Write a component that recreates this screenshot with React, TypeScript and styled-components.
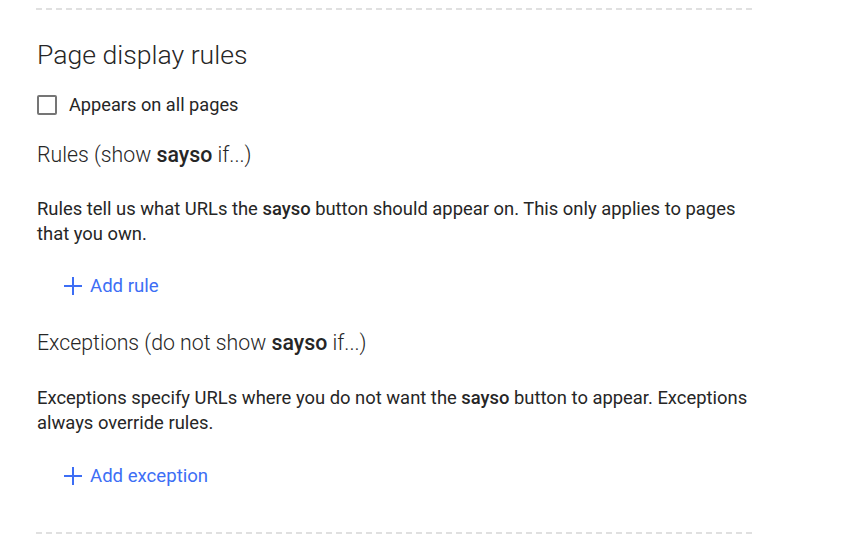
import { createGlobalStyle, styled } from "styled-components"

const GlobalStyle = createGlobalStyle`
  html, body {
    margin: 0;
    padding: 0;
    background: #fff;
  }
  body {
    font-family: Roboto, "Liberation Sans", sans-serif;
    color: #262626;
  }
`

const Page = styled.div`
  padding: 8px 0 0 36px;
  width: 716px;
`

const Section = styled.section`
  border-top: 2px dashed #e0e0e0;
  border-bottom: 2px dashed #e0e0e0;
  padding: 29px 0 44px 1px;
  display: flex;
  flex-direction: column;
`

const Title = styled.h2`
  margin: 0;
  font-size: 26.6px;
  font-weight: 300;
  line-height: 32px;
`

const CheckRow = styled.label`
  display: flex;
  align-items: center;
  gap: 12px;
  margin-top: 22px;
  font-size: 18.2px;
  font-weight: 400;
  line-height: 24px;
  cursor: pointer;
`

const Box = styled.span`
  width: 16px;
  height: 16px;
  border: 2px solid #757575;
  border-radius: 2px;
`

const Heading = styled.h3<{ $gap: number }>`
  margin: ${p => p.$gap}px 0 0;
  font-size: 21.3px;
  font-weight: 300;
  line-height: 28px;

  b {
    font-weight: 500;
  }
`

const Text = styled.p<{ $gap: number }>`
  margin: ${p => p.$gap}px 0 0;
  font-size: 18.4px;
  font-weight: 400;
  line-height: 25px;
  b {
    font-weight: 500;
  }
`

const AddButton = styled.button<{ $gap: number }>`
  display: flex;
  align-items: center;
  gap: 8px;
  align-self: flex-start;
  margin: ${p => p.$gap}px 0 0 27px;
  padding: 0;
  border: 0;
  background: none;
  color: #3d6ef5;
  font-family: inherit;
  font-size: 18.6px;
  font-weight: 400;
  line-height: 24px;
  cursor: pointer;
`

const PlusIcon = () => (
  <svg width="18" height="18" viewBox="0 0 18 18" fill="none" stroke="currentColor" strokeWidth="2">
    <path d="M9 0v18M0 9h18" />
  </svg>
)

export default function App() {
  return (
    <Page>
      <GlobalStyle />
      <Section>
        <Title>Page display rules</Title>
        <CheckRow>
          <Box />
          Appears on all pages
        </CheckRow>
        <Heading $gap={24}>Rules (show <b>sayso</b> if...)</Heading>
        <Text $gap={27}>
          Rules tell us what URLs the <b>sayso</b> button should appear on. This only applies to pages that you own.
        </Text>
        <AddButton $gap={28}><PlusIcon />Add rule</AddButton>
        <Heading $gap={31}>Exceptions (do not show <b>sayso</b> if...)</Heading>
        <Text $gap={28}>
          Exceptions specify URLs where you do not want the <b>sayso</b> button to appear. Exceptions always override rules.
        </Text>
        <AddButton $gap={29}><PlusIcon />Add exception</AddButton>
      </Section>
    </Page>
  )
}
